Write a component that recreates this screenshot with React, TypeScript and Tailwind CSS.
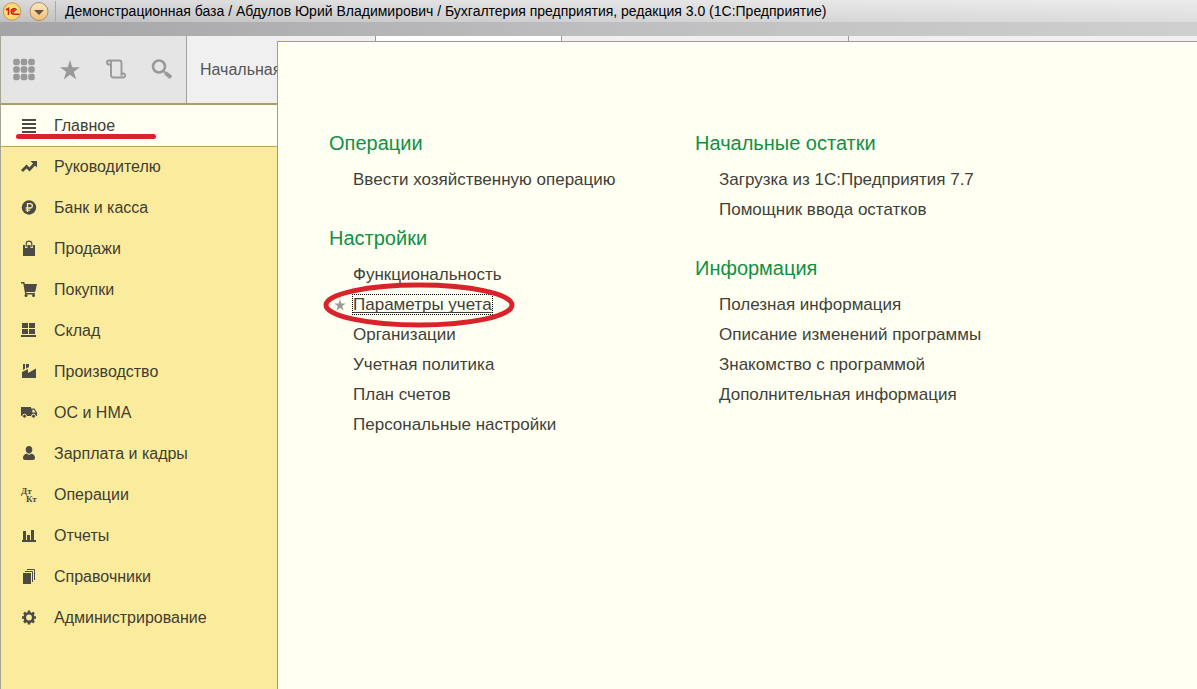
import React from "react";

type Section = { label: string; icon: React.ReactNode };
type Group = { title: string; items: string[] };

const SECTIONS: Section[] = [
  {
    label: "Главное",
    icon: <path d="M1 1h14v2H1zM1 5h14v2H1zM1 9h14v2H1zM1 13h14v2H1z" />,
  },
  {
    label: "Руководителю",
    icon: (
      <>
        <path d="M1 12 5.500 7.500l3 3L13.500 5" stroke="currentColor" strokeWidth="2.800" fill="none" />
        <path d="M9.500 2H16v6.500z" />
      </>
    ),
  },
  {
    label: "Банк и касса",
    icon: (
      <>
        <circle cx="8" cy="7.500" r="7.200" />
        <path d="M6.500 12V3.700h2.700a2.100 2.100 0 0 1 0 4.300H4.600M4.600 10.100h4.600" stroke="#fbec9d" strokeWidth="1.300" fill="none" />
      </>
    ),
  },
  {
    label: "Продажи",
    icon: (
      <>
        <path d="M2 4h12v11H2z" />
        <path d="M5.200 7V3.300a2.800 2.800 0 0 1 5.600 0V7" stroke="#fbec9d" strokeWidth="2.400" fill="none" />
        <path d="M5.200 6V2.800a2.800 2.600 0 0 1 5.600 0V6" stroke="currentColor" strokeWidth="1.200" fill="none" />
      </>
    ),
  },
  {
    label: "Покупки",
    icon: (
      <>
        <path d="M0 0h3.300l.6 2H16l-1.800 8H5.100l.4 1H14v1.400H4.200L2.300 1.400H0z" />
        <circle cx="5" cy="13.500" r="1.500" />
        <circle cx="12.500" cy="13.500" r="1.500" />
      </>
    ),
  },
  {
    label: "Склад",
    icon: <path d="M1 0h6v5H1zM8 0h6v5H8zM1 6h6v5H1zM8 6h6v5H8zM0 12h15v2H0z" />,
  },
  {
    label: "Производство",
    icon: <path d="M1 14V8l6-3v4l8-4.500V14zM2 0h2v4.800L2 6zM5 0h3v3L5 4.400z" />,
  },
  {
    label: "ОС и НМА",
    icon: (
      <>
        <path d="M0 2h10v9H0zM10 3.500h3.500L16 7.500V11h-6z" />
        <path d="M11.300 4.700h1.600l1.800 2.900h-3.400z" fill="#fbec9d" />
        <circle cx="3.500" cy="11.200" r="2" stroke="#fbec9d" />
        <circle cx="12.500" cy="11.200" r="2" stroke="#fbec9d" />
      </>
    ),
  },
  {
    label: "Зарплата и кадры",
    icon: <path d="M8 0c2 0 3.300 1.400 3.300 3.400S10 7.600 8 7.600 4.700 5.400 4.700 3.400 6 0 8 0zM2 12c0-2.700 1.500-4 4-4.200L8 9l2-1.200c2.500.2 4 1.500 4 4.200 0 1.300-.7 2-2 2H4c-1.300 0-2-.7-2-2z" />,
  },
  {
    label: "Операции",
    icon: (
      <g fontFamily="Liberation Serif, serif" fontWeight="bold" fontSize="9">
        <text x="0" y="7">Дт</text>
        <text x="5" y="15">Кт</text>
      </g>
    ),
  },
  {
    label: "Отчеты",
    icon: <path d="M1 12h14v2H1zM2 3h3v9H2zM6 7h3v5H6zM10 2h3v10h-3z" />,
  },
  {
    label: "Справочники",
    icon: (
      <>
        <path d="M2 4h8v11H2z" />
        <path d="M4 2.500h7.500V13M6 .5h7.500V11" stroke="currentColor" fill="none" />
      </>
    ),
  },
  {
    label: "Администрирование",
    icon: (
      <>
        <circle cx="8" cy="7.500" r="4.200" stroke="currentColor" strokeWidth="2.600" fill="none" />
        <path
          d="M8 .5V3M8 12v2.500M1 7.500h2.500M12.500 7.500H15M3 2.500l1.800 1.800M11.200 10.700 13 12.500M13 2.500l-1.800 1.800M4.800 10.700 3 12.500"
          stroke="currentColor"
          strokeWidth="2.600"
        />
      </>
    ),
  },
];

const COLUMNS: Group[][] = [
  [
    { title: "Операции", items: ["Ввести хозяйственную операцию"] },
    {
      title: "Настройки",
      items: [
        "Функциональность",
        "Параметры учета",
        "Организации",
        "Учетная политика",
        "План счетов",
        "Персональные настройки",
      ],
    },
  ],
  [
    { title: "Начальные остатки", items: ["Загрузка из 1С:Предприятия 7.7", "Помощник ввода остатков"] },
    {
      title: "Информация",
      items: [
        "Полезная информация",
        "Описание изменений программы",
        "Знакомство с программой",
        "Дополнительная информация",
      ],
    },
  ],
];

const STAR = "M12 2l2.300 7.300H22l-6.200 4.500 2.400 7.700-6.200-4.700-6.200 4.700 2.400-7.700L2 9.300h7.700z";

const TitleBar = () => (
  <header className="h-9 bg-linear-to-r from-[#a5a5a7] via-[#bebec0] to-[#cfcfcf]">
    <div className="flex h-[22px] items-center bg-linear-to-b from-white/60 to-white/30 pl-[2px]">
      <svg viewBox="0 0 20 20" className="size-5 shrink-0" aria-label="1С">
        <defs>
          <radialGradient id="logo">
            <stop offset="0" stopColor="#fff6a0" />
            <stop offset="1" stopColor="#f8cf62" />
          </radialGradient>
        </defs>
        <circle cx="10" cy="10.500" r="8.800" fill="url(#logo)" stroke="#c39a68" />
        <path d="M4 9 6.500 7.500V14M14.500 9c-.8-1.200-1.700-1.600-3-1.300-3.300.7-3 5.500.5 5.500h5.500M13.300 10c-1.300-1-2.500-.3-2.200.6.1.5.6.600 1.200.600" fill="none" stroke="#d3201b" strokeWidth="1.600" />
      </svg>
      <button type="button" aria-label="Главное меню" className="ml-[7px] size-5 shrink-0">
        <svg viewBox="0 0 20 20">
          <defs>
            <linearGradient id="menu" x2="0" y2="1">
              <stop offset="0" stopColor="#faeacb" />
              <stop offset="1" stopColor="#f1bd75" />
            </linearGradient>
          </defs>
          <circle cx="10" cy="10.500" r="9" fill="url(#menu)" stroke="#b08c62" />
          <path d="M5 9h10l-5 5z" fill="#64543c" />
        </svg>
      </button>
      <span className="ml-[6px] h-5 w-px bg-[#aaaaac]" />
      <h1 className="ml-[9px] whitespace-nowrap text-sm leading-5 text-black">
        Демонстрационная база / Абдулов Юрий Владимирович / Бухгалтерия предприятия, редакция 3.0 (1С:Предприятие)
      </h1>
    </div>
  </header>
);

const Tools = () => (
  <div className="flex w-[186px] shrink-0 items-center gap-[22px] border-r border-[#a2a2a2] bg-[#e5e5e5] pl-[11px] text-[#999]">
    <button type="button" aria-label="Все функции">
      <svg viewBox="0 0 24 24" className="size-6" fill="currentColor">
        {[4, 11.5, 19].map((y) =>
          [4.5, 12, 19.5].map((x) => <rect key={`${x}-${y}`} x={x - 3.3} y={y - 3.3} width="6.600" height="6.600" rx="2.200" />)
        )}
      </svg>
    </button>
    <button type="button" aria-label="Избранное">
      <svg viewBox="0 0 24 24" className="size-6" fill="currentColor">
        <path d={STAR} />
      </svg>
    </button>
    <button type="button" aria-label="История">
      <svg viewBox="0 0 24 24" className="size-6" fill="none" stroke="currentColor" strokeWidth="1.900">
        <path d="M6.500 6.500H5a2 2 0 1 1 2-2V17a2.500 2.500 0 0 0 2.500 2.500H19M5.500 2.500H15a2.500 2.500 0 0 1 2.500 2.500v10.500M17.500 18v-2.500h1.800a2 2 0 1 1-1.800 3" />
      </svg>
    </button>
    <button type="button" aria-label="Поиск">
      <svg viewBox="0 0 24 24" className="size-6" fill="none" stroke="currentColor">
        <circle cx="9" cy="8.500" r="6" strokeWidth="2.600" />
        <path d="M13.500 13l2 2" strokeWidth="2" />
        <path d="M15.500 15l5.500 4.500" strokeWidth="4" />
      </svg>
    </button>
  </div>
);

const SectionNav = () => (
  <nav className="flex-1 bg-[#fbec9d]">
    {SECTIONS.map(({ label, icon }, index) => (
      <a
        key={label}
        href="#"
        aria-current={index === 0 ? "page" : undefined}
        className={`relative flex h-[41px] items-center gap-[17px] pl-5 text-base text-[#3f3d33] ${
          index === 0 ? "z-10 bg-[#fffff2] shadow-[0_1px_0_#b5a74e]" : ""
        }`}
      >
        <svg viewBox="0 0 16 16" className="size-4 shrink-0 overflow-visible text-[#4b4a45]" fill="currentColor">
          {icon}
        </svg>
        {label}
        {index === 0 && <span className="absolute bottom-[7px] left-[15px] h-[5px] w-[140px] rounded-full bg-[#d8232a]" />}
      </a>
    ))}
  </nav>
);

const MenuLink = ({ label }: { label: string }) => {
  if (label !== "Параметры учета") {
    return (
      <a href="#" className="block w-fit">
        {label}
      </a>
    );
  }

  return (
    <div className="relative w-fit">
      <svg viewBox="0 0 24 24" className="absolute top-2 -left-5 size-[14px]" fill="#999">
        <path d={STAR} />
      </svg>
      <a
        href="#"
        className="underline underline-offset-2 outline-1 outline-dotted outline-black [text-decoration-skip-ink:none]"
      >
        {label}
      </a>
      {/* Hand-drawn marker around the link */}
      <svg viewBox="0 0 192 46" className="pointer-events-none absolute -top-2 -left-[30px] h-[46px] w-[192px] max-w-none">
        <ellipse cx="96" cy="23" rx="93" ry="20" fill="none" stroke="#d8232a" strokeWidth="5" />
      </svg>
    </div>
  );
};

export default function App() {
  return (
    <div className="flex min-h-screen flex-col overflow-hidden bg-[#f0f0f0] font-['Liberation_Sans',Arial,sans-serif]">
      <TitleBar />
      <div className="flex flex-1">
        <aside className="flex w-[277px] shrink-0 flex-col border-l border-[#a5a595]">
          <div className="flex h-[69px] overflow-hidden border-b-2 border-[#ab9f62]">
            <Tools />
            <a href="#" className="flex items-center pl-[13px] text-base whitespace-nowrap text-[#555]">
              Начальная
            </a>
          </div>
          <SectionNav />
        </aside>

        <div className="flex min-w-0 flex-1 flex-col">
          {/* Only the tops of the tabs stay visible above the open menu */}
          <div className="flex h-[5px]">
            <span className="w-[99px] border-r border-[#999]" />
            <span className="w-[186px] border-r border-[#999] bg-white" />
            <span className="w-[287px] border-r border-[#999]" />
          </div>
          <main className="flex flex-1 border-t border-l border-[#b0a14c] bg-[#fffff2] pt-[87px] pl-[51px]">
            {COLUMNS.map((groups) => (
              <div key={groups[0].title} className="flex w-[366px] flex-col gap-[29px]">
                {groups.map(({ title, items }) => (
                  <section key={title}>
                    <h2 className="mb-2 text-xl leading-7 text-[#0f9146]">{title}</h2>
                    <ul className="pl-6 text-[17px] leading-[30px] text-[#3f3f3a]">
                      {items.map((item) => (
                        <li key={item}>
                          <MenuLink label={item} />
                        </li>
                      ))}
                    </ul>
                  </section>
                ))}
              </div>
            ))}
          </main>
        </div>
      </div>
    </div>
  );
}
